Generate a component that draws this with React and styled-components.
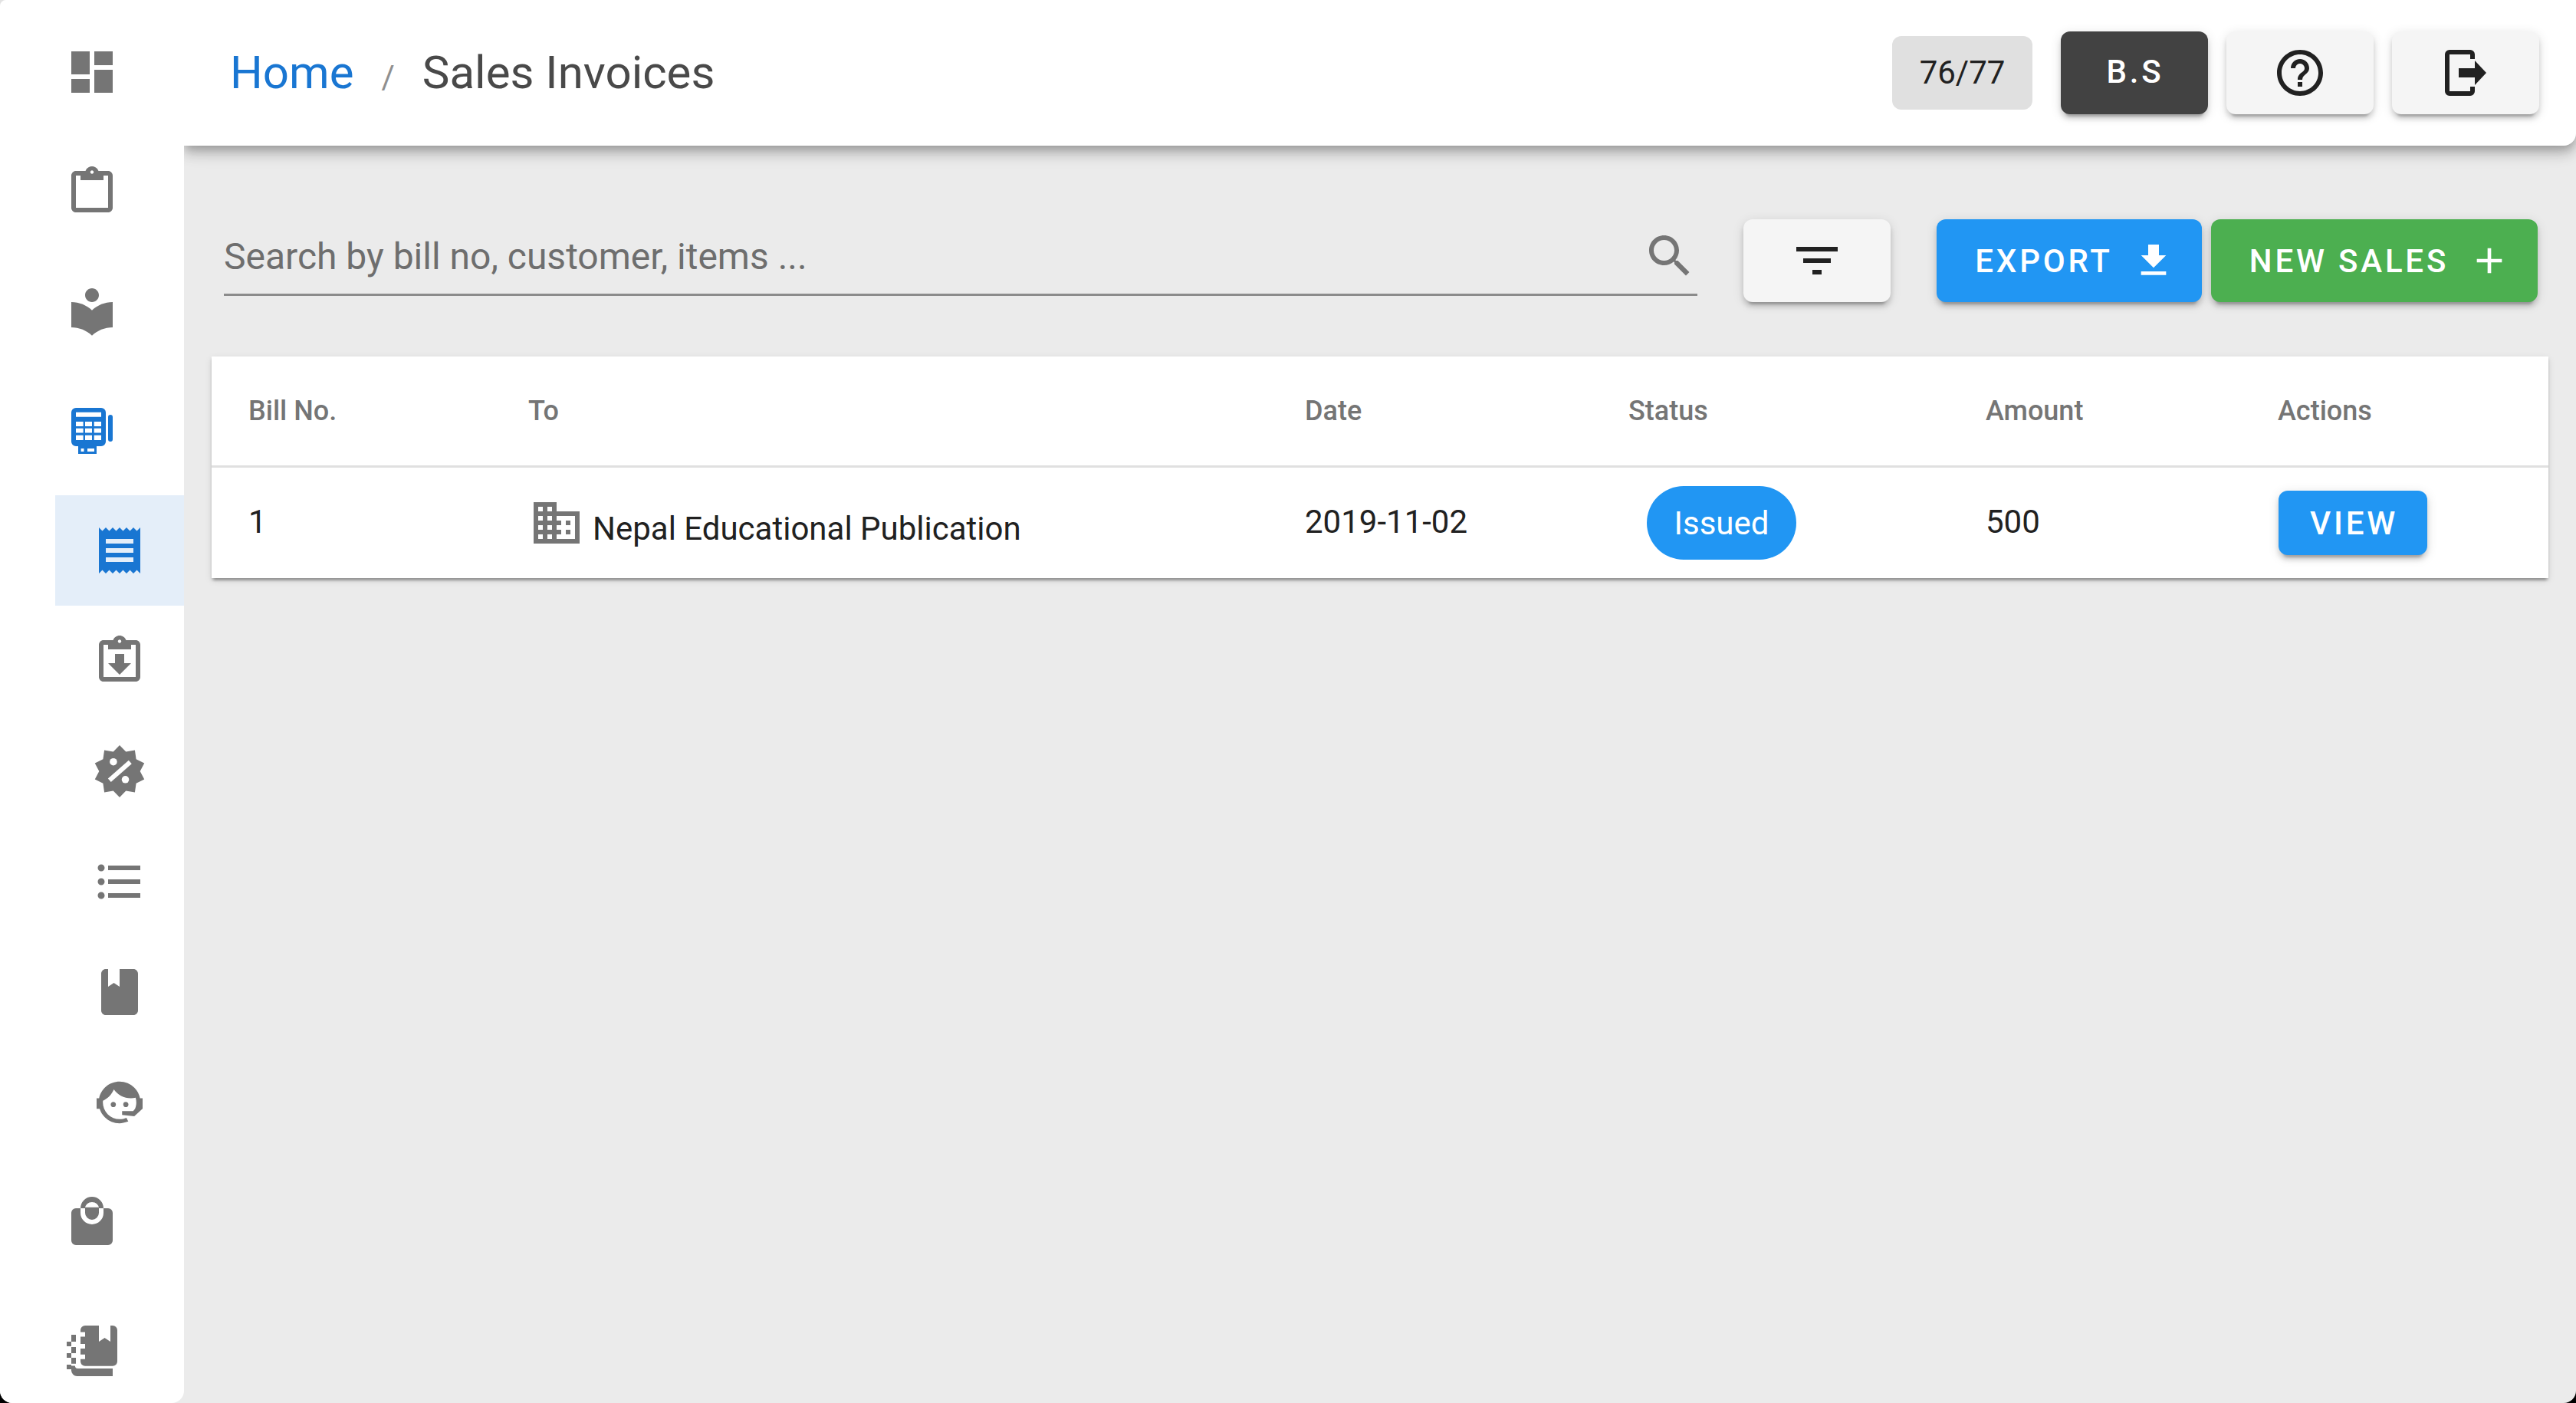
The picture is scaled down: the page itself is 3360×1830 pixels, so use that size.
import React from "react";
import styled, { createGlobalStyle } from "styled-components";

const Global = createGlobalStyle`
  html, body { margin: 0; padding: 0; width: 3360px; height: 1830px; overflow: hidden;
    background: linear-gradient(#e2e2e2 50%, #000 50%); }
  * { box-sizing: border-box; }
`;

const Page = styled.div`
  width: 3360px; height: 1830px; display: flex; overflow: hidden;
  background: #ebebeb; font-family: Roboto, "Liberation Sans", sans-serif;
  border-radius: 8px 0 16px 16px;
`;
const Sidebar = styled.nav`
  width: 240px; flex: none; height: 1830px; background: #fff; position: relative; z-index: 2;
  display: flex; flex-direction: column; padding-top: 16px; border-radius: 0 0 16px 0;
`;
const NavItem = styled.div`
  height: ${p => p.$h || 156}px; flex: none; display: flex; align-items: center; justify-content: center;
`;
const SubList = styled.div`
  margin: 6px 0; padding-left: 72px; display: flex; flex-direction: column;
`;
const SubItem = styled.div`
  height: 144px; display: flex; align-items: center; justify-content: center;
  background: ${p => (p.$active ? "#e4eef9" : "transparent")};
`;
const Glyph = styled.svg`
  width: ${p => p.$size || 72}px; height: ${p => p.$size || 72}px; flex: none; display: block;
  fill: ${p => p.$color || "#757575"};
`;
const Main = styled.div`
  flex: 1; min-width: 0; display: flex; flex-direction: column;
`;
const Header = styled.header`
  height: 190px; flex: none; background: #fff; display: flex; align-items: center;
  padding: 0 48px 0 60px; border-radius: 0 0 16px 0; position: relative; z-index: 1;
  box-shadow: 0 6px 12px -3px rgba(0,0,0,.2), 0 12px 15px 0 rgba(0,0,0,.14), 0 3px 30px 0 rgba(0,0,0,.12);
`;
const Crumbs = styled.div`
  flex: 1; display: flex; align-items: baseline; font-size: 60px; line-height: 70px;
  padding-top: 6px;
`;
const CrumbLink = styled.span` color: #1976d2; `;
const CrumbSep = styled.span` color: #8f8f8f; font-size: 42px; margin: 0 36px 0 36px; `;
const CrumbCurrent = styled.span` color: #494949; `;
const Quota = styled.div`
  width: 183px; height: 96px; border-radius: 12px; background: #e0e0e0; color: #212121;
  display: flex; align-items: center; justify-content: center; font-size: 42px; margin-right: 37px;
  padding-bottom: 2px;
`;
const elev2 = "0 9px 3px -6px rgba(0,0,0,.2), 0 6px 6px 0 rgba(0,0,0,.14), 0 3px 15px 0 rgba(0,0,0,.12)";
const Button = styled.button`
  height: ${p => p.$h || 108}px; width: ${p => p.$w}px; flex: none; border: 0; border-radius: 12px;
  background: ${p => p.$bg}; color: ${p => p.$fg || "#fff"}; box-shadow: ${elev2};
  display: flex; align-items: center; justify-content: center; gap: ${p => p.$gap || 0}px;
  font-family: inherit; font-size: 42px; font-weight: 500; letter-spacing: ${p => p.$ls || 3.8}px;
  padding: 0 0 ${p => p.$pb || 0}px ${p => p.$pl || 0}px; margin-left: ${p => p.$ml || 0}px;
`;
const Content = styled.main`
  flex: 1; padding: 96px 36px 0 36px; display: flex; flex-direction: column;
`;
const Toolbar = styled.div`
  display: flex; align-items: flex-start; padding-left: 16px; padding-right: 14px;
`;
const SearchField = styled.label`
  flex: 1; height: 100px; border-bottom: 3px solid #8b8b8b; display: flex; align-items: center; padding-bottom: 1px;
`;
const SearchInput = styled.input`
  flex: 1; min-width: 0; border: 0; outline: 0; background: transparent; padding: 0;
  font-family: inherit; font-size: 48px; color: #616161;
  &::placeholder { color: #6e6e6e; opacity: 1; }
`;
const Card = styled.section`
  margin-top: 71px; background: #fff;
  box-shadow: 0 6px 3px -3px rgba(0,0,0,.2), 0 3px 3px 0 rgba(0,0,0,.14), 0 3px 9px 0 rgba(0,0,0,.12);
`;
const cols = "365px 1013px 422px 466px 381px 1fr";
const HeadRow = styled.div`
  height: 145px; display: grid; grid-template-columns: ${cols}; align-items: center;
  border-bottom: 3px solid #e0e0e0; padding-bottom: 1px;
`;
const HeadCell = styled.div`
  padding-left: 48px; font-size: 36px; font-weight: 500; color: #757575;
`;
const BodyRow = styled.div`
  height: 144px; display: grid; grid-template-columns: ${cols}; align-items: center;
`;
const Cell = styled.div`
  padding-left: 48px; font-size: 42px; color: #212121; padding-bottom: 4px;
`;
const PartyCell = styled(Cell)`
  display: flex; align-items: flex-end; gap: 11px; padding-left: 49px; padding-bottom: 0;
`;
const PartyName = styled.span` line-height: 50px; position: relative; top: -3px; `;
const StatusCell = styled.div` padding-left: 72px; `;
const StatusChip = styled.div`
  width: 195px; height: 96px; border-radius: 48px; background: #2196f3; color: #fff;
  display: flex; align-items: center; justify-content: center; font-size: 42px;
`;

const ICON = {
  dashboard: "M3 13h8V3H3v10zm0 8h8v-6H3v6zm10 0h8V11h-8v10zm0-18v6h8V3h-8z",
  clipboard: "M19 3h-4.18C14.4 1.84 13.3 1 12 1s-2.4.84-2.82 2H5c-1.1 0-2 .9-2 2v14c0 1.1.9 2 2 2h14c1.1 0 2-.9 2-2V5c0-1.1-.9-2-2-2zm-7-.25c.41 0 .75.34.75.75s-.34.75-.75.75-.75-.34-.75-.75.34-.75.75-.75zM19 19H5V5h2v2h10V5h2v14z",
  library: "M12 11.55C9.64 9.35 6.48 8 3 8v11c3.48 0 6.64 1.35 9 3.55 2.36-2.19 5.52-3.55 9-3.55V8c-3.48 0-6.64 1.35-9 3.55zM12 8c1.66 0 3-1.34 3-3s-1.34-3-3-3-3 1.34-3 3 1.34 3 3 3z",
  calculator: "M5 2h11a2 2 0 0 1 2 2v12.7a2 2 0 0 1-2 2h-2V22H6v-3.3H5a2 2 0 0 1-2-2V4a2 2 0 0 1 2-2zM5 3.9v2h11v-2zM5 8v2h3.2V8zM9 8v2h3V8zM12.9 8v2H16V8zM5 10.9v1.9h3.2v-1.9zM9 10.9v1.9h3v-1.9zM12.9 10.9v1.9H16v-1.9zM5 13.9V16h3.2v-2.1zM9 13.9V16h3v-2.1zM12.9 13.9V16H16v-2.1zM7.2 19.7V21h1.3v-1.3zM10 19.7V21h3v-1.3zM20 5a1 1 0 0 1 1 1v9.7a1 1 0 0 1-2 0V6a1 1 0 0 1 1-1z",
  receipt: "M18 17H6v-2h12v2zm0-4H6v-2h12v2zm0-4H6V7h12v2zM3 22l1.5-1.5L6 22l1.5-1.5L9 22l1.5-1.5L12 22l1.5-1.5L15 22l1.5-1.5L18 22l1.5-1.5L21 22V2l-1.5 1.5L18 2l-1.5 1.5L15 2l-1.5 1.5L12 2l-1.5 1.5L9 2 7.5 3.5 6 2 4.5 3.5 3 2v20z",
  list: "M4 10.5c-.83 0-1.5.67-1.5 1.5s.67 1.5 1.5 1.5 1.5-.67 1.5-1.5-.67-1.5-1.5-1.5zm0-6c-.83 0-1.5.67-1.5 1.5S3.17 7.5 4 7.5 5.5 6.83 5.5 6 4.83 4.5 4 4.5zm0 12c-.83 0-1.5.68-1.5 1.5s.68 1.5 1.5 1.5 1.5-.68 1.5-1.5-.67-1.5-1.5-1.5zM7 19h14v-2H7v2zm0-6h14v-2H7v2zm0-8v2h14V5H7z",
  book: "M18 2h-6v7.7L9.5 8 7 9.7V2H6c-1.1 0-2 .9-2 2v16c0 1.1.9 2 2 2h12c1.1 0 2-.9 2-2V4c0-1.1-.9-2-2-2z",
  agent: "M18.72,14.76C19.07,13.91 19.26,13 19.26,12C19.26,11.28 19.15,10.59 18.96,9.95C18.31,10.1 17.63,10.18 16.92,10.18C13.86,10.18 11.15,8.67 9.5,6.34C8.61,8.5 6.91,10.26 4.77,11.22C4.73,11.47 4.73,11.74 4.73,12A7.27,7.27 0 0,0 12,19.27C13.05,19.27 14.06,19.04 14.97,18.63C15.54,19.72 15.8,20.26 15.78,20.26C14.14,20.81 12.87,21.08 12,21.08C9.58,21.08 7.27,20.13 5.57,18.42C4.53,17.38 3.76,16.11 3.33,14.73H2V10.18H3.09C3.93,6.04 7.6,2.92 12,2.92C14.4,2.92 16.71,3.87 18.42,5.58C19.69,6.84 20.54,8.45 20.89,10.18H22V14.67H22V14.69L22,14.73H21.94L18.38,18L13.08,17.4V15.73H17.91L18.72,14.76M9.27,11.77C9.57,11.77 9.86,11.89 10.07,12.11C10.28,12.32 10.4,12.61 10.4,12.91C10.4,13.21 10.28,13.5 10.07,13.71C9.86,13.92 9.57,14.04 9.27,14.04C8.64,14.04 8.13,13.54 8.13,12.91C8.13,12.28 8.64,11.77 9.27,11.77M14.72,11.77C15.35,11.77 15.85,12.28 15.85,12.91C15.85,13.54 15.35,14.04 14.72,14.04C14.09,14.04 13.58,13.54 13.58,12.91A1.14,1.14 0 0,1 14.72,11.77Z",
  bag: "M7 6a5 5 0 0 1 10 0h-2a3 2.7 0 0 0-6 0zM5 6h2v2a5 5 0 0 0 10 0V6h2a2 2 0 0 1 2 2v12a2 2 0 0 1-2 2H5a2 2 0 0 1-2-2V8a2 2 0 0 1 2-2zM9 5.6h6V8a3 3 0 0 1-6 0z",
  filter: "M10 18h4v-2h-4v2zM3 6v2h18V6H3zm3 7h12v-2H6v2z",
  search: "M15.5 14h-.79l-.28-.27C15.41 12.59 16 11.11 16 9.5 16 5.91 13.09 3 9.5 3S3 5.91 3 9.5 5.91 16 9.5 16c1.61 0 3.09-.59 4.23-1.57l.27.28v.79l5 4.99L20.49 19l-4.99-5zm-6 0C7.01 14 5 11.99 5 9.5S7.01 5 9.5 5 14 7.01 14 9.5 11.99 14 9.5 14z",
  help: "M11 18h2v-2h-2v2zm1-16C6.48 2 2 6.48 2 12s4.48 10 10 10 10-4.48 10-10S17.52 2 12 2zm0 18c-4.41 0-8-3.59-8-8s3.59-8 8-8 8 3.59 8 8-3.59 8-8 8zm0-14c-2.21 0-4 1.79-4 4h2c0-1.1.9-2 2-2s2 .9 2 2c0 2-3 1.75-3 5h2c0-2.25 3-2.5 3-5 0-2.21-1.79-4-4-4z",
  logout: "M5 2h9a2 2 0 0 1 2 2v2h-2V4H5v16h9v-2h2v2a2 2 0 0 1-2 2H5a2 2 0 0 1-2-2V4a2 2 0 0 1 2-2zM9 10h7V6.7l5 5.3-5 5.3V14H9z",
  download: "M19 9h-4V3H9v6H5l7 7 7-7zM5 18v2h14v-2H5z",
  plus: "M19 13h-6v6h-2v-6H5v-2h6V5h2v6h6v2z",
  business: "M12 7V3H2v18h20V7H12zM6 19H4v-2h2v2zm0-4H4v-2h2v2zm0-4H4V9h2v2zm0-4H4V5h2v2zm4 12H8v-2h2v2zm0-4H8v-2h2v2zm0-4H8V9h2v2zm0-4H8V5h2v2zm10 12h-8v-2h2v-2h-2v-2h2v-2h-2V9h8v10zm-2-8h-2v2h2v-2zm0 4h-2v2h2v-2z",
};

const Icon = ({ name, size, color }) => (
  <Glyph viewBox="0 0 24 24" $size={size} $color={color}>
    <path fillRule="evenodd" d={ICON[name]} />
  </Glyph>
);

const ReturnedIcon = () => (
  <Glyph viewBox="0 0 24 24">
    <path fillRule="evenodd" d={ICON.clipboard} />
    <path d="M10 9h4v4h3l-5 5-5-5h3z" />
  </Glyph>
);

const badgePoints = Array.from({ length: 20 }, (_, i) => {
  const r = i % 2 ? 8.9 : 11.3;
  const a = (i * Math.PI) / 10;
  return `${(12 + r * Math.sin(a)).toFixed(2)},${(12 - r * Math.cos(a)).toFixed(2)}`;
}).join(" ");

const PercentIcon = () => (
  <Glyph viewBox="0 0 24 24">
    <polygon points={badgePoints} />
    <circle cx="9.3" cy="7.9" r="1.6" fill="#fff" />
    <circle cx="14.5" cy="15.6" r="1.6" fill="#fff" />
    <path d="M7.6 15.9 16.6 8" stroke="#fff" strokeWidth="2" fill="none" />
  </Glyph>
);

const NotebookIcon = () => (
  <Glyph viewBox="0 0 28 28" $size={84}>
    <path d="M11 3h6v7l2.5-1.7L22 10V3h1a2 2 0 0 1 2 2v13.6a2 2 0 0 1-2 2H11a2 2 0 0 1-2-2v-1h2v-2H9v-2.6h2v-2H9V7.8h2v-2H9V5a2 2 0 0 1 2-2z" />
    <path d="M5 20.5h1.6c.1.8.5 1.2 1.2 1.2H23V25H7.5A2.5 2.5 0 0 1 5 22.5z" />
    <path d="M5 7h2v3H5zM3 10h2v2H3zM5 12.3h2V15H5zM3 15h2v2H3zM5 17h2v2.6H5zM3 20h2v2H3z" />
  </Glyph>
);

const columns = ["Bill No.", "To", "Date", "Status", "Amount", "Actions"];

export default function App() {
  return (
    <>
      <Global />
      <Page>
        <Sidebar>
          <NavItem><Icon name="dashboard" /></NavItem>
          <NavItem><Icon name="clipboard" /></NavItem>
          <NavItem><Icon name="library" /></NavItem>
          <NavItem><Icon name="calculator" color="#1976d2" /></NavItem>
          <SubList>
            <SubItem $active><Icon name="receipt" color="#1976d2" /></SubItem>
            <SubItem><ReturnedIcon /></SubItem>
            <SubItem><PercentIcon /></SubItem>
            <SubItem><Icon name="list" /></SubItem>
            <SubItem><Icon name="book" /></SubItem>
            <SubItem><Icon name="agent" /></SubItem>
          </SubList>
          <NavItem><Icon name="bag" /></NavItem>
          <NavItem $h={180}><NotebookIcon /></NavItem>
        </Sidebar>
        <Main>
          <Header>
            <Crumbs>
              <CrumbLink>Home</CrumbLink>
              <CrumbSep>/</CrumbSep>
              <CrumbCurrent>Sales Invoices</CrumbCurrent>
            </Crumbs>
            <Quota>76/77</Quota>
            <Button $w={192} $bg="#424242" $pb={3} $pl={2}>B.S</Button>
            <Button $w={192} $bg="#f5f5f5" $ml={24}><Icon name="help" color="#212121" /></Button>
            <Button $w={192} $bg="#f5f5f5" $ml={24}><Icon name="logout" color="#212121" /></Button>
          </Header>
          <Content>
            <Toolbar>
              <SearchField>
                <SearchInput placeholder="Search by bill no, customer, items ..." />
                <Icon name="search" />
              </SearchField>
              <Button $w={192} $bg="#f5f5f5" $ml={60}><Icon name="filter" color="#212121" /></Button>
              <Button $w={346} $bg="#2196f3" $ml={60} $gap={25} $pl={15}>EXPORT<Icon name="download" size={56} color="#fff" /></Button>
              <Button $w={426} $bg="#4caf50" $ml={12} $gap={25} $pl={15}>NEW SALES<Icon name="plus" size={56} color="#fff" /></Button>
            </Toolbar>
            <Card>
              <HeadRow>
                {columns.map(c => <HeadCell key={c}>{c}</HeadCell>)}
              </HeadRow>
              <BodyRow>
                <Cell>1</Cell>
                <PartyCell>
                  <Icon name="business" />
                  <PartyName>Nepal Educational Publication</PartyName>
                </PartyCell>
                <Cell>2019-11-02</Cell>
                <StatusCell><StatusChip>Issued</StatusChip></StatusCell>
                <Cell>500</Cell>
                <div><Button $w={194} $h={84} $bg="#2196f3" $ml={49} $pl={3}>VIEW</Button></div>
              </BodyRow>
            </Card>
          </Content>
        </Main>
      </Page>
    </>
  );
}
